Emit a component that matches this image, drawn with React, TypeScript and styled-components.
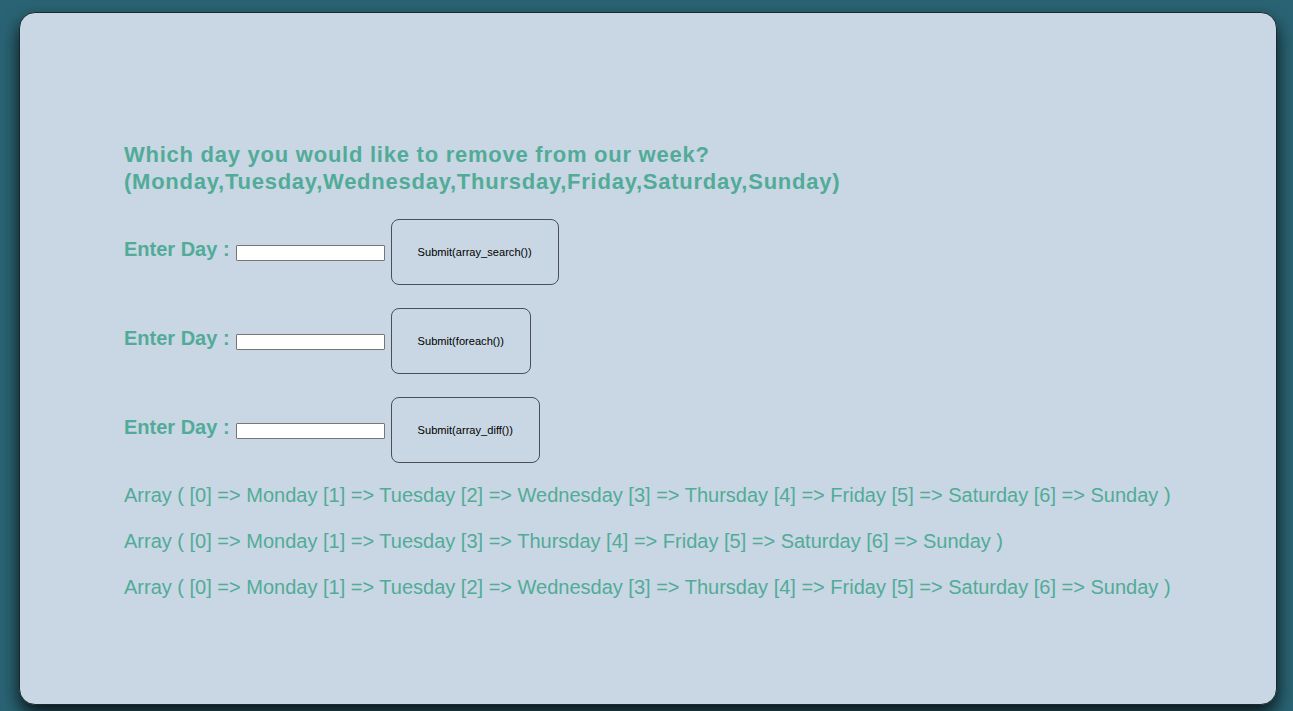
import React from "react";
import styled, { createGlobalStyle } from "styled-components";

const Global = createGlobalStyle`
  html, body { margin: 0; padding: 0; }
  body {
    background: #2a6474;
    font-family: "Liberation Sans", Arial, sans-serif;
    height: 711px;
    overflow: hidden;
  }
`;

const Card = styled.main`
  box-sizing: border-box;
  margin: 12px 16px 0 19px;
  height: 693px;
  background: #c8d7e3;
  border: 1px solid #1c2a30;
  border-radius: 16px;
  box-shadow: 0 9px 18px rgba(0, 0, 0, 0.8);
  padding: 128px 0 0 104px;
  color: #52ab98;
`;

const Heading = styled.h2`
  margin: 0 0 24px 0;
  font-size: 22px;
  line-height: 27px;
  font-weight: bold;
  letter-spacing: 0.75px;
`;

const Form = styled.form`
  display: flex;
  align-items: center;
  gap: 6px;
  margin: 0 0 23px 0;
  &:last-of-type {
    margin-bottom: 21px;
  }
`;

const Label = styled.label`
  font-size: 20px;
  font-weight: bold;
  margin: 0 0 5px 0;
`;

const Input = styled.input`
  box-sizing: border-box;
  width: 149px;
  height: 16px;
  border: 1px solid #767676;
  border-radius: 1px;
  background: #fff;
  padding: 0;
  margin: 2px 0 0 0;
`;

const Button = styled.button`
  box-sizing: border-box;
  height: 66px;
  padding: 0 26px;
  background: transparent;
  border: 1px solid #4a4f55;
  border-radius: 8px;
  font-family: "Liberation Sans", Arial, sans-serif;
  font-size: 11.1px;
  color: #000;
`;

const Result = styled.p`
  margin: 0 0 23px 0;
  font-size: 20px;
  line-height: 23px;
`;

const rows = ["Submit(array_search())", "Submit(foreach())", "Submit(array_diff())"];

const full =
  "Array ( [0] => Monday [1] => Tuesday [2] => Wednesday [3] => Thursday [4] => Friday [5] => Saturday [6] => Sunday )";
const removed =
  "Array ( [0] => Monday [1] => Tuesday [3] => Thursday [4] => Friday [5] => Saturday [6] => Sunday )";

export default function App() {
  return (
    <>
      <Global />
      <Card>
        <Heading>
          Which day you would like to remove from our week?
          <br />
          (Monday,Tuesday,Wednesday,Thursday,Friday,Saturday,Sunday)
        </Heading>
        {rows.map((r) => (
          <Form key={r} onSubmit={(e) => e.preventDefault()}>
            <Label>Enter Day :</Label>
            <Input type="text" />
            <Button type="submit">{r}</Button>
          </Form>
        ))}
        <Result>{full}</Result>
        <Result>{removed}</Result>
        <Result>{full}</Result>
      </Card>
    </>
  );
}
